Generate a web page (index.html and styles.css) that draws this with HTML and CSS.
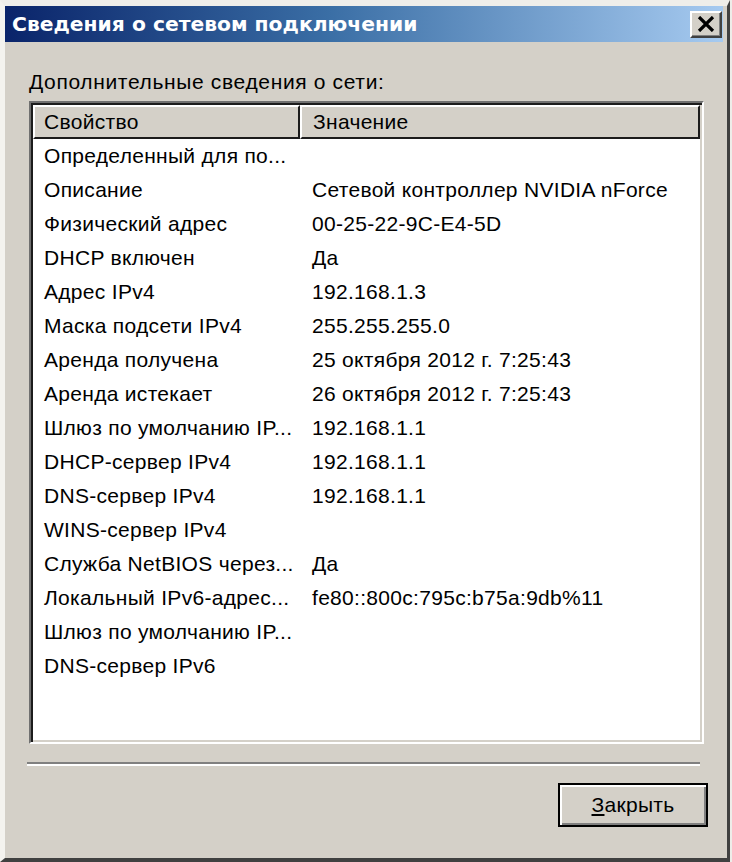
FILE: index.html
```html
<!DOCTYPE html>
<html lang="ru">
<head>
<meta charset="utf-8">
<title>Сведения о сетевом подключении</title>
<link rel="stylesheet" href="styles.css">
</head>
<body>
<div class="window">
  <div class="titlebar">
    <span class="title">Сведения о сетевом подключении</span>
    <button class="close" type="button" aria-label="Закрыть">
      <svg width="18" height="16" viewBox="0 0 18 16"><path d="M2 1 L16 15 M16 1 L2 15" stroke="#000" stroke-width="3.2" fill="none"/></svg>
    </button>
  </div>
  <div class="content">
    <div class="label">Дополнительные сведения о сети:</div>
    <div class="list">
      <div class="header">
        <div class="hcell hcell-prop">Свойство</div>
        <div class="hcell hcell-val">Значение</div>
      </div>
      <div class="rows">
        <div class="row"><span class="prop">Определенный для по...</span><span class="val"></span></div>
        <div class="row"><span class="prop">Описание</span><span class="val">Сетевой контроллер NVIDIA nForce</span></div>
        <div class="row"><span class="prop">Физический адрес</span><span class="val">00-25-22-9C-E4-5D</span></div>
        <div class="row"><span class="prop">DHCP включен</span><span class="val">Да</span></div>
        <div class="row"><span class="prop">Адрес IPv4</span><span class="val">192.168.1.3</span></div>
        <div class="row"><span class="prop">Маска подсети IPv4</span><span class="val">255.255.255.0</span></div>
        <div class="row"><span class="prop">Аренда получена</span><span class="val">25 октября 2012 г. 7:25:43</span></div>
        <div class="row"><span class="prop">Аренда истекает</span><span class="val">26 октября 2012 г. 7:25:43</span></div>
        <div class="row"><span class="prop">Шлюз по умолчанию IP...</span><span class="val">192.168.1.1</span></div>
        <div class="row"><span class="prop">DHCP-сервер IPv4</span><span class="val">192.168.1.1</span></div>
        <div class="row"><span class="prop">DNS-сервер IPv4</span><span class="val">192.168.1.1</span></div>
        <div class="row"><span class="prop">WINS-сервер IPv4</span><span class="val"></span></div>
        <div class="row"><span class="prop">Служба NetBIOS через...</span><span class="val">Да</span></div>
        <div class="row"><span class="prop">Локальный IPv6-адрес...</span><span class="val">fe80::800c:795c:b75a:9db%11</span></div>
        <div class="row"><span class="prop">Шлюз по умолчанию IP...</span><span class="val"></span></div>
        <div class="row"><span class="prop">DNS-сервер IPv6</span><span class="val"></span></div>
      </div>
    </div>
    <div class="separator"></div>
    <div class="actions">
      <button class="btn" type="button"><span class="u">З</span>акрыть</button>
    </div>
  </div>
</div>
</body>
</html>
```

FILE: styles.css
```css
html, body {
  margin: 0;
  padding: 0;
  background: #eeede9;
}

body {
  font-family: "Liberation Sans", Arial, sans-serif;
  font-size: 21px;
  letter-spacing: 0.3px;
  color: #000;
}

.window {
  width: 730px;
  height: 862px;
  box-sizing: border-box;
  background: #d4d0c8;
  border-style: solid;
  border-width: 6px 3px 4px 5px;
  border-color: #efeeea #404040 #404040 #f4f3ef;
  padding-right: 4px;
  display: flex;
  flex-direction: column;
}

.titlebar {
  height: 36px;
  flex: none;
  display: flex;
  align-items: center;
  justify-content: space-between;
  background: linear-gradient(to right, #0a246a 0%, #3a6ea5 45%, #a6caf0 100%);
  padding-left: 7px;
  padding-right: 1px;
}

.title {
  color: #fff;
  font-family: "DejaVu Sans", Verdana, sans-serif;
  font-weight: bold;
  font-size: 20.3px;
  letter-spacing: 0;
}

.close {
  width: 32px;
  height: 27px;
  padding: 0;
  margin: 0;
  display: flex;
  align-items: center;
  justify-content: center;
  background: #d4d0c8;
  border: 2px solid;
  border-color: #ffffff #404040 #404040 #ffffff;
  box-shadow: inset -1px -1px #808080;
}

.content {
  flex: 1;
  display: flex;
  flex-direction: column;
  padding: 28px 15px 0 24px;
}

.label {
  line-height: 24px;
  height: 24px;
  letter-spacing: 0.65px;
}

.list {
  margin-top: 7px;
  margin-right: 4px;
  height: 643px;
  box-sizing: border-box;
  background: #fff;
  border: 2px solid;
  border-color: #707070 #ffffff #ffffff #707070;
  box-shadow: inset 2px 2px #1c1c1c, inset -2px -2px #d4d0c8;
  padding: 2px;
}

.header {
  display: flex;
  height: 34px;
}

.hcell {
  box-sizing: border-box;
  height: 34px;
  line-height: 30px;
  background: #d4d0c8;
  border-style: solid;
  border-width: 2px;
  border-color: #ffffff #1c1c1c #1c1c1c #ffffff;
  white-space: nowrap;
  overflow: hidden;
}

.hcell-prop {
  width: 267px;
  padding-left: 9px;
}

.hcell-val {
  flex: 1;
  padding-left: 11px;
}

.rows {
  padding-top: 0;
}

.row {
  display: grid;
  grid-template-columns: 268px 1fr;
  height: 34px;
  line-height: 34px;
  padding-left: 11px;
  white-space: nowrap;
}

.separator {
  margin: 18px 8px 0 -2px;
  height: 2px;
  background: #808080;
  border-bottom: 2px solid #ffffff;
}

.actions {
  display: flex;
  justify-content: flex-end;
  padding-top: 17px;
}

.btn {
  width: 150px;
  height: 44px;
  padding: 0;
  font-family: "Liberation Sans", Arial, sans-serif;
  font-size: 21px;
  letter-spacing: 0.3px;
  color: #000;
  background: #d4d0c8;
  border: 2px solid #000;
  box-shadow: inset 2px 2px #ffffff, inset -2px -2px #808080;
}

.u {
  text-decoration: underline;
}
```
